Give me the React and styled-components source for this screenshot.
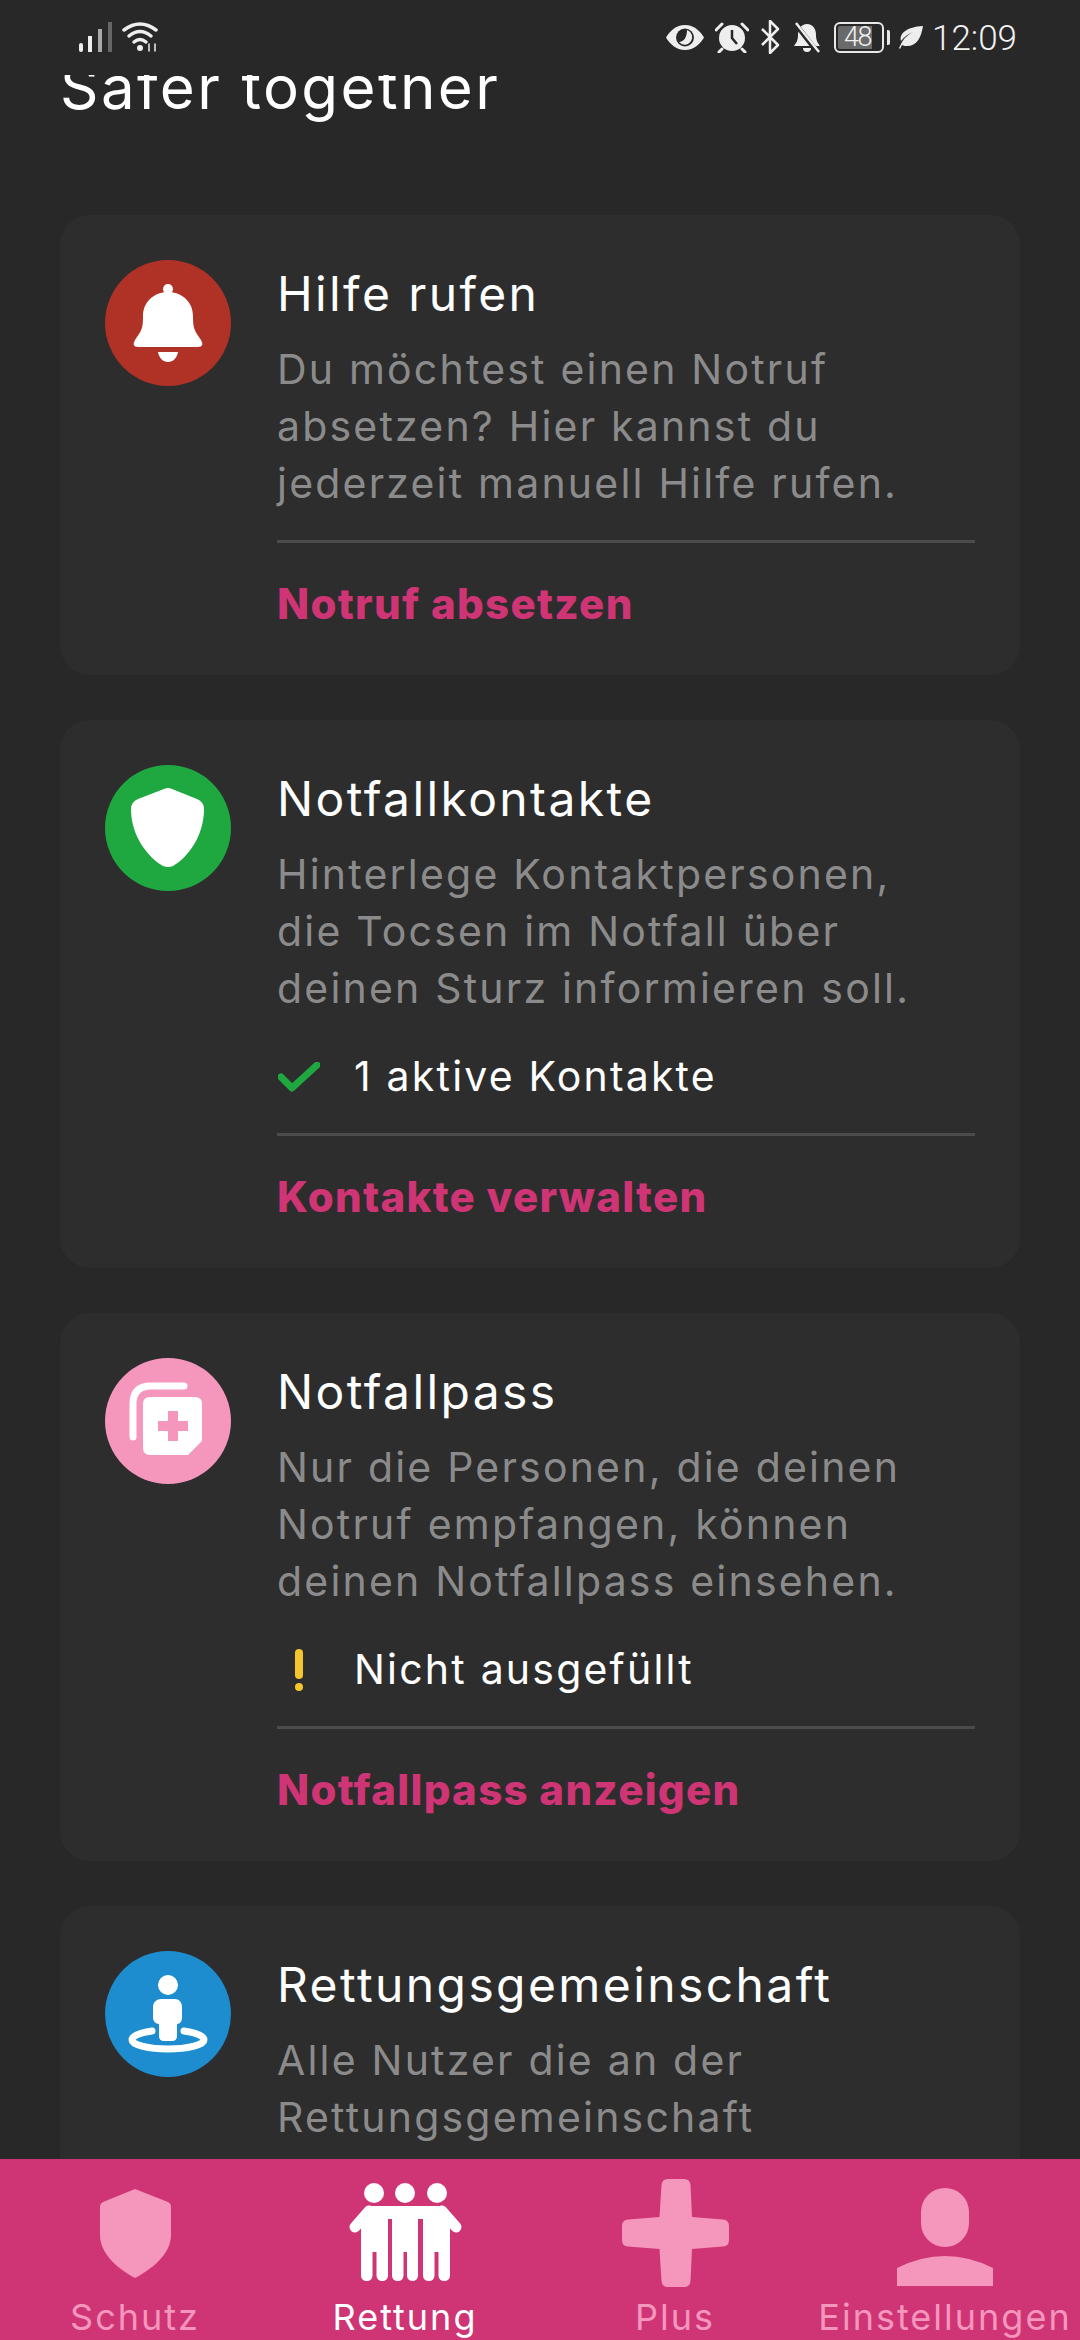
import React from 'react';
import styled, { createGlobalStyle } from 'styled-components';

const PINK = '#cf3475';
const SOFT = '#f596bd';

const Global = createGlobalStyle`
  html, body { margin: 0; padding: 0; background: #282828; }
  * { box-sizing: border-box; }
`;

const Screen = styled.div`
  width: 1080px;
  height: 2340px;
  display: flex;
  flex-direction: column;
  overflow: hidden;
  background: #282828;
  font-family: Inter, "Liberation Sans", sans-serif;
`;

const StatusBar = styled.div`
  flex: 0 0 75px;
  display: flex;
  justify-content: space-between;
  align-items: flex-start;
  padding: 20px 63px 0 79px;
  color: #eee;
`;

const StatusGroup = styled.div`
  display: flex;
  align-items: center;
  height: 34px;
  gap: ${p => p.$gap}px;
`;

const Battery = styled.div`
  width: 50px;
  height: 31px;
  border: 2px solid #e8e8e8;
  border-radius: 6px;
  padding: 2px;
  display: flex;
  margin-right: -8px;
`;

const BatteryFill = styled.div`
  width: 34px;
  background: #6a6a6a;
  border-radius: 2px 0 0 2px;
  color: #f0f0f0;
  font: 300 27px/23px Roboto, sans-serif;
  white-space: nowrap;
  letter-spacing: -1.5px;
  padding-left: 6px;
`;

const BatteryNub = styled.div`
  width: 3px;
  height: 15px;
  background: #e8e8e8;
  border-radius: 0 2px 2px 0;
`;

const LeafSlot = styled.div`
  display: flex;
  margin: 0 -2px;
`;

const Clock = styled.span`
  font: 300 35px/34px Roboto, sans-serif;
  color: #f2f2f2;
  margin-top: 4px;
`;

const Scroller = styled.div`
  flex: 1;
  min-height: 0;
  overflow: hidden;
  padding: 0 60px;
`;

const Heading = styled.h1`
  margin: -23px 0 93px;
  font-size: 60px;
  line-height: 70px;
  font-weight: 400;
  color: #fff;
  white-space: nowrap;
  letter-spacing: 2.4px;
`;

const Card = styled.section`
  display: grid;
  grid-template-columns: 126px 1fr;
  column-gap: 46px;
  padding: 45px;
  margin-bottom: 45px;
  background: #2d2d2d;
  border-radius: 30px;
`;

const Badge = styled.div`
  width: 126px;
  height: 126px;
  border-radius: 50%;
  background: ${p => p.$color};

  svg { display: block; }
`;

const Body = styled.div`
  min-width: 0;
`;

const Title = styled.h2`
  margin: 5px 0 0;
  font-size: 48px;
  line-height: 57px;
  font-weight: 400;
  color: #fff;
  white-space: nowrap;
  letter-spacing: 2.4px;
`;

const Text = styled.p`
  margin: 19px 0 0;
  font-size: 41px;
  line-height: 57px;
  color: #8b8b8b;
  white-space: nowrap;
  letter-spacing: 2.2px;
`;

const StateRow = styled.div`
  display: flex;
  align-items: center;
  gap: 33px;
  margin-top: 31px;
  font-size: 41px;
  line-height: 57px;
  color: #fff;
  white-space: nowrap;
  letter-spacing: 2.2px;
`;

const StateIcon = styled.div`
  flex: 0 0 44px;
  display: flex;
  justify-content: center;
`;

const Divider = styled.div`
  height: 3px;
  margin-top: 28px;
  background: #4b4b4b;
`;

const Action = styled.div`
  margin: 32px 0 -2px;
  font-size: 42px;
  line-height: 57px;
  font-weight: 800;
  color: ${PINK};
  white-space: nowrap;
  letter-spacing: 1.3px;
`;

const BottomNav = styled.nav`
  flex: 0 0 181px;
  display: grid;
  grid-template-columns: repeat(4, 270px);
  padding-top: 16px;
  background: ${PINK};
  overflow: hidden;
`;

const NavItem = styled.div`
  display: flex;
  flex-direction: column;
  align-items: center;
  gap: 4px;
  color: ${p => (p.$active ? '#fff' : SOFT)};

  svg { display: block; fill: currentColor; }
`;

const NavLabel = styled.span`
  font-size: 36px;
  line-height: 45px;
  white-space: nowrap;
  letter-spacing: 2px;
`;

const Glyph = ({ children }) => (
  <svg width="126" height="126" viewBox="0 0 126 126" fill="#fff">{children}</svg>
);

const BellIcon = () => (
  <Glyph>
    <circle cx="63" cy="29" r="5" />
    <path d="M63 32C49 32 38 42 38 56C38 68 37 70 30 80Q26 87 33 87H93Q100 87 96 80C89 70 88 68 88 56C88 42 77 32 63 32Z" />
    <path d="M53 92H73C72 98 68 102 63 102C58 102 54 98 53 92Z" />
  </Glyph>
);

const ShieldIcon = () => (
  <Glyph>
    <path d="M63 23Q65 23 67 24L92 34Q99 37 99 44C99 72 82 93 68 101Q63 103 58 101C44 93 26 72 26 44Q26 37 33 34L59 24Q61 23 63 23Z" />
  </Glyph>
);

const PassIcon = () => (
  <Glyph>
    <path d="M79 28H46Q28 28 28 46V79" fill="none" stroke="#fff" strokeWidth="7" strokeLinecap="round" />
    <path d="M45 39H90Q97 39 97 46V83L83 97H45Q38 97 38 90V46Q38 39 45 39Z" />
    <path d="M63 53H73V63H83V73H73V83H63V73H53V63H63Z" fill="#f596bd" />
  </Glyph>
);

const CommunityIcon = () => (
  <Glyph>
    <circle cx="63" cy="34" r="10" />
    <path d="M56 48H70C74 48 77 51 77 56V67C77 70 75 73 72 73V85Q72 90 67 90H59Q54 90 54 85V73C51 73 48 70 48 67V56C48 51 52 48 56 48Z" />
    <path d="M47 80C33 82 27 85 27 89C27 94 44 98 63 98C82 98 99 94 99 89C99 85 93 82 79 80" fill="none" stroke="#fff" strokeWidth="7" strokeLinecap="round" />
  </Glyph>
);

const CheckIcon = () => (
  <svg width="42" height="30" viewBox="0 0 42 30" fill="none" stroke="#20a840" strokeWidth="7" strokeLinecap="round" strokeLinejoin="round">
    <path d="M3 15L14 26L39 3" />
  </svg>
);

const WarnIcon = () => (
  <svg width="8" height="42" viewBox="0 0 8 42" fill="#f6c62e">
    <rect width="8" height="30" rx="4" />
    <circle cx="4" cy="38" r="4" />
  </svg>
);

const NavShield = () => (
  <svg width="120" height="116" viewBox="0 0 120 116">
    <path d="M60 14L93 27Q96 28.500 96 32V60C96 80 75 95 60 103C45 95 25 80 25 60V32Q25 28.500 28 27Z" />
  </svg>
);

const NavGroup = () => (
  <svg width="120" height="116" viewBox="0 0 120 116">
    <circle cx="29" cy="18" r="10" />
    <circle cx="60" cy="18" r="10" />
    <circle cx="92" cy="18" r="10" />
    <path d="M27 31H94V44H27Z" />
    <path d="M24 36L10 52M97 36L111 52" stroke="currentColor" strokeWidth="11" strokeLinecap="round" />
    <path d="M16 40H43V77H16ZM47 40H73V77H47ZM78 40H105V77H78Z" />
    <rect x="16" y="60" width="11.500" height="46" rx="5.500" />
    <rect x="31.500" y="60" width="11.500" height="46" rx="5.500" />
    <rect x="47" y="60" width="11.500" height="46" rx="5.500" />
    <rect x="62" y="60" width="11" height="46" rx="5.500" />
    <rect x="78" y="60" width="11.500" height="46" rx="5.500" />
    <rect x="93.500" y="60" width="11.500" height="46" rx="5.500" />
  </svg>
);

const NavPlus = () => (
  <svg width="120" height="116" viewBox="0 0 120 116">
    <path d="M53 4H69Q75 4 75.500 10L77 42L108 44.500Q114 45 114 51V65Q114 71 108 71.500L77 74L75.500 106Q75 112 69 112H53Q47 112 46.500 106L44.500 74L13 71.500Q7 71 7 65V51Q7 45 13 44.500L44.500 42L46.500 10Q47 4 53 4Z" />
  </svg>
);

const NavPerson = () => (
  <svg width="120" height="116" viewBox="0 0 120 116">
    <rect x="36" y="13" width="48" height="59" rx="24" />
    <path d="M12 93Q60 69 108 93V111H12Z" />
  </svg>
);

const Signal = () => (
  <svg width="33" height="30" viewBox="0 0 33 30">
    <rect x="0" y="21" width="4" height="9" rx="2" fill="#eee" />
    <rect x="9" y="14" width="4" height="16" fill="#eee" />
    <rect x="19" y="7" width="4" height="23" fill="#aaa" />
    <rect x="29" y="0" width="4" height="30" fill="#666" />
  </svg>
);

const Wifi = () => (
  <svg width="38" height="30" viewBox="0 0 38 30" fill="none" stroke="#eee" strokeWidth="3.500" strokeLinecap="round">
    <path d="M2 8Q18 -4 34 8" />
    <path d="M7 14Q18 5 29 14" />
    <path d="M12 20Q18 15 24 20" />
    <circle cx="18" cy="26" r="3" fill="#eee" stroke="none" />
    <path d="M27 22V29M33 22V29" strokeWidth="1.500" />
  </svg>
);

const Eye = () => (
  <svg width="38" height="25" viewBox="0 0 38 25">
    <path d="M19 0C28 0 34 6 38 12.500C34 19 28 25 19 25C10 25 4 19 0 12.500C4 6 10 0 19 0Z" fill="#eee" />
    <circle cx="19" cy="12.500" r="9" fill="#282828" />
    <path d="M21 5A7.500 7.500 0 1 1 13 17C18 17 21 12 21 5Z" fill="#eee" />
  </svg>
);

const Alarm = () => (
  <svg width="34" height="31" viewBox="0 0 34 31">
    <circle cx="17" cy="16" r="13" fill="#eee" />
    <path d="M1 8L7 2M33 8L27 2M7 27L4 30M27 27L30 30" stroke="#eee" strokeWidth="3" strokeLinecap="round" />
    <path d="M17 8V16L22 22" stroke="#282828" strokeWidth="2.500" fill="none" />
  </svg>
);

const Bluetooth = () => (
  <svg width="20" height="34" viewBox="0 0 20 34" fill="none" stroke="#eee" strokeWidth="2.500" strokeLinejoin="round">
    <path d="M2 9L18 25L10 33V1L18 9L2 25" />
  </svg>
);

const BellOff = () => (
  <svg width="32" height="31" viewBox="0 0 32 31">
    <path d="M16 2C22 2 25 7 25 13C25 19 27 21 29 24H3C5 21 7 19 7 13C7 7 10 2 16 2Z" fill="#eee" />
    <path d="M12 26H20A4 4 0 0 1 12 26Z" fill="#eee" />
    <path d="M3 0L27 31" stroke="#282828" strokeWidth="5" />
    <path d="M5 1L28 30" stroke="#eee" strokeWidth="2.500" />
  </svg>
);

const Leaf = () => (
  <svg width="24" height="23" viewBox="0 0 24 23">
    <path d="M24 0C22 12 18 20 8 20C6 20 5 20 3 19L1 23L0 22L3 16C6 11 10 8 14 6C9 8 5 11 2 15C0 7 8 1 24 0Z" fill="#eee" />
  </svg>
);

const cards = [
  {
    color: '#b03226',
    icon: <BellIcon />,
    title: 'Hilfe rufen',
    lines: ['Du möchtest einen Notruf', 'absetzen? Hier kannst du', 'jederzeit manuell Hilfe rufen.'],
    action: 'Notruf absetzen',
  },
  {
    color: '#20a840',
    icon: <ShieldIcon />,
    title: 'Notfallkontakte',
    lines: ['Hinterlege Kontaktpersonen,', 'die Tocsen im Notfall über', 'deinen Sturz informieren soll.'],
    stateIcon: <CheckIcon />,
    state: '1 aktive Kontakte',
    action: 'Kontakte verwalten',
  },
  {
    color: SOFT,
    icon: <PassIcon />,
    title: 'Notfallpass',
    lines: ['Nur die Personen, die deinen', 'Notruf empfangen, können', 'deinen Notfallpass einsehen.'],
    stateIcon: <WarnIcon />,
    state: 'Nicht ausgefüllt',
    action: 'Notfallpass anzeigen',
  },
  {
    color: '#1e8dcf',
    icon: <CommunityIcon />,
    title: 'Rettungsgemeinschaft',
    lines: ['Alle Nutzer die an der', 'Rettungsgemeinschaft'],
  },
];

const tabs = [
  { label: 'Schutz', icon: <NavShield /> },
  { label: 'Rettung', icon: <NavGroup />, active: true },
  { label: 'Plus', icon: <NavPlus /> },
  { label: 'Einstellungen', icon: <NavPerson /> },
];

const App = () => {
  return (
    <>
      <Global />
      <Screen>
        <StatusBar>
          <StatusGroup $gap={10}>
            <Signal />
            <Wifi />
          </StatusGroup>
          <StatusGroup $gap={11}>
            <Eye />
            <Alarm />
            <Bluetooth />
            <BellOff />
            <Battery>
              <BatteryFill>48</BatteryFill>
            </Battery>
            <BatteryNub />
            <LeafSlot><Leaf /></LeafSlot>
            <Clock>12:09</Clock>
          </StatusGroup>
        </StatusBar>
        <Scroller>
          <Heading>Safer together</Heading>
          {cards.map(card => (
            <Card key={card.title}>
              <Badge $color={card.color}>{card.icon}</Badge>
              <Body>
                <Title>{card.title}</Title>
                <Text>
                  {card.lines.map(line => (
                    <React.Fragment key={line}>{line}<br /></React.Fragment>
                  ))}
                </Text>
                {card.state && (
                  <StateRow>
                    <StateIcon>{card.stateIcon}</StateIcon>
                    {card.state}
                  </StateRow>
                )}
                {card.action && (
                  <>
                    <Divider />
                    <Action>{card.action}</Action>
                  </>
                )}
              </Body>
            </Card>
          ))}
        </Scroller>
        <BottomNav>
          {tabs.map(tab => (
            <NavItem key={tab.label} $active={tab.active}>
              {tab.icon}
              <NavLabel>{tab.label}</NavLabel>
            </NavItem>
          ))}
        </BottomNav>
      </Screen>
    </>
  );
};

export default App;
